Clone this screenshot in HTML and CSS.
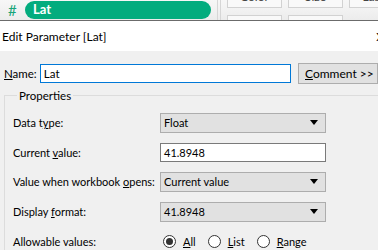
FILE: index.html
```html
<!DOCTYPE html>
<html lang="en">
<head>
  <meta charset="UTF-8" />
  <title>Edit Parameter</title>
  <link rel="stylesheet" href="styles.css">
</head>
<body>
  <div class="app-strip">
    <span class="hash">#</span>
    <span class="pill">Lat</span>
    <span class="divider"></span>
    <div class="marks">
      <div class="mark-row">
        <span class="mark">Color</span>
        <span class="mark">Size</span>
        <span class="mark">Label</span>
      </div>
      <div class="mark-row">
        <span class="mark"></span>
        <span class="mark"></span>
      </div>
    </div>
  </div>
  <div class="dialog">
    <div class="titlebar">
      <span>Edit Parameter [Lat]</span>
      <span class="close">X</span>
    </div>
    <div class="body">
      <div class="name-row">
        <label><u>N</u>ame:</label>
        <div class="textbox focus">Lat</div>
        <button class="comment"><u>C</u>omment &gt;&gt;</button>
      </div>
      <fieldset class="group">
        <legend>Properties</legend>
        <div class="prop">
          <label>Data t<u>y</u>pe:</label>
          <div class="combo">Float<span class="arrow"></span></div>
        </div>
        <div class="prop">
          <label>Current <u>v</u>alue:</label>
          <div class="textbox">41.8948</div>
        </div>
        <div class="prop">
          <label>Value when workbook <u>o</u>pens:</label>
          <div class="combo">Current value<span class="arrow"></span></div>
        </div>
        <div class="prop">
          <label>Display <u>f</u>ormat:</label>
          <div class="combo">41.8948<span class="arrow"></span></div>
        </div>
        <div class="prop">
          <label>Allowable values:</label>
          <div class="radios">
            <span class="radio checked"></span><span class="rlabel"><u>A</u>ll</span>
            <span class="radio"></span><span class="rlabel"><u>L</u>ist</span>
            <span class="radio"></span><span class="rlabel"><u>R</u>ange</span>
          </div>
        </div>
      </fieldset>
    </div>
  </div>
</body>
</html>
```

FILE: styles.css
```css
body {
  margin: 0;
  width: 378px;
  height: 250px;
  overflow: hidden;
  font-family: Lato, "Liberation Sans", sans-serif;
  font-size: 11px;
  color: #000;
  background: #f0f0f0;
}
.app-strip {
  height: 20px;
  background: linear-gradient(#f7f7f7, #ececec);
  display: flex;
  align-items: flex-start;
  border-bottom: 1px solid #6b6b6b;
  overflow: hidden;
}
.app-strip > * {
  flex-shrink: 0;
}
.hash {
  color: #17a57a;
  font-size: 15px;
  line-height: 20px;
  margin-left: 8px;
  width: 17px;
}
.pill {
  margin-top: 1px;
  width: 186px;
  height: 18px;
  background: #03ac7e;
  border-radius: 9px;
  color: #fff;
  font-weight: bold;
  font-size: 13px;
  line-height: 17px;
  padding-left: 8px;
  box-sizing: border-box;
}
.divider {
  margin-left: 6px;
  width: 2px;
  height: 20px;
  border-left: 1px solid #d6d6d6;
  border-right: 1px solid #d6d6d6;
}
.marks {
  margin-left: 6px;
  display: flex;
  flex-direction: column;
  gap: 7px;
  margin-top: -6px;
}
.mark-row {
  display: flex;
  gap: 6px;
}
.mark {
  flex-shrink: 0;
  width: 53px;
  height: 12px;
  border: 1px solid #d2d2d2;
  background: #f9f9f9;
  color: #444;
  font-size: 12px;
  line-height: 4px;
  text-align: center;
}
.dialog {
  background: #f0f0f0;
}
.titlebar {
  height: 30px;
  background: #fff;
  display: flex;
  justify-content: space-between;
  align-items: center;
  padding-left: 2px;
  font-size: 12px;
}
.close {
  margin-right: -6px;
}
.body {
  padding: 12px 0 0 4px;
}
.name-row {
  display: flex;
  align-items: center;
  height: 20px;
  font-size: 11.5px;
}
.name-row label {
  width: 37px;
  white-space: nowrap;
}
.textbox {
  box-sizing: border-box;
  height: 19px;
  background: #fff;
  border: 1px solid #7a7a7a;
  padding-left: 3px;
  line-height: 17px;
}
.name-row .textbox {
  width: 259px;
}
.textbox.focus {
  border-color: #0078d7;
}
.comment {
  flex-shrink: 0;
  margin-left: 7px;
  height: 21px;
  width: 80px;
  background: #e1e1e1;
  border: 1px solid #adadad;
  font: inherit;
  font-size: 12px;
  text-align: left;
  padding: 0 0 0 6px;
  white-space: nowrap;
}
.group {
  margin: 6px 0 0 0;
  padding: 11px 0 0 8px;
  border: none;
  border-top: 1px solid #dcdcdc;
  border-left: 1px solid #dcdcdc;
}
.group legend {
  padding: 0 2px;
  margin-left: 4px;
  font-size: 11.5px;
}
.prop {
  display: flex;
  align-items: center;
  height: 19px;
  margin-bottom: 10.7px;
}
.prop label {
  width: 147px;
  white-space: nowrap;
}
.prop .textbox, .combo {
  width: 166px;
}
.combo {
  box-sizing: border-box;
  height: 20px;
  background: #e1e1e1;
  border: 1px solid #adadad;
  padding-left: 3px;
  line-height: 17px;
  display: flex;
  justify-content: space-between;
  align-items: center;
}
.arrow {
  width: 0;
  height: 0;
  border-left: 4px solid transparent;
  border-right: 4px solid transparent;
  border-top: 5px solid #000;
  margin-right: 7px;
}
.radios {
  display: flex;
  align-items: center;
  margin-left: 3px;
}
.radio {
  box-sizing: border-box;
  width: 13px;
  height: 13px;
  border: 1px solid #333;
  border-radius: 50%;
  background: #fff;
  display: flex;
  align-items: center;
  justify-content: center;
}
.radio.checked::after {
  content: "";
  width: 7px;
  height: 7px;
  border-radius: 50%;
  background: #333;
}
.rlabel {
  margin-left: 7px;
  margin-right: 12px;
}
```
